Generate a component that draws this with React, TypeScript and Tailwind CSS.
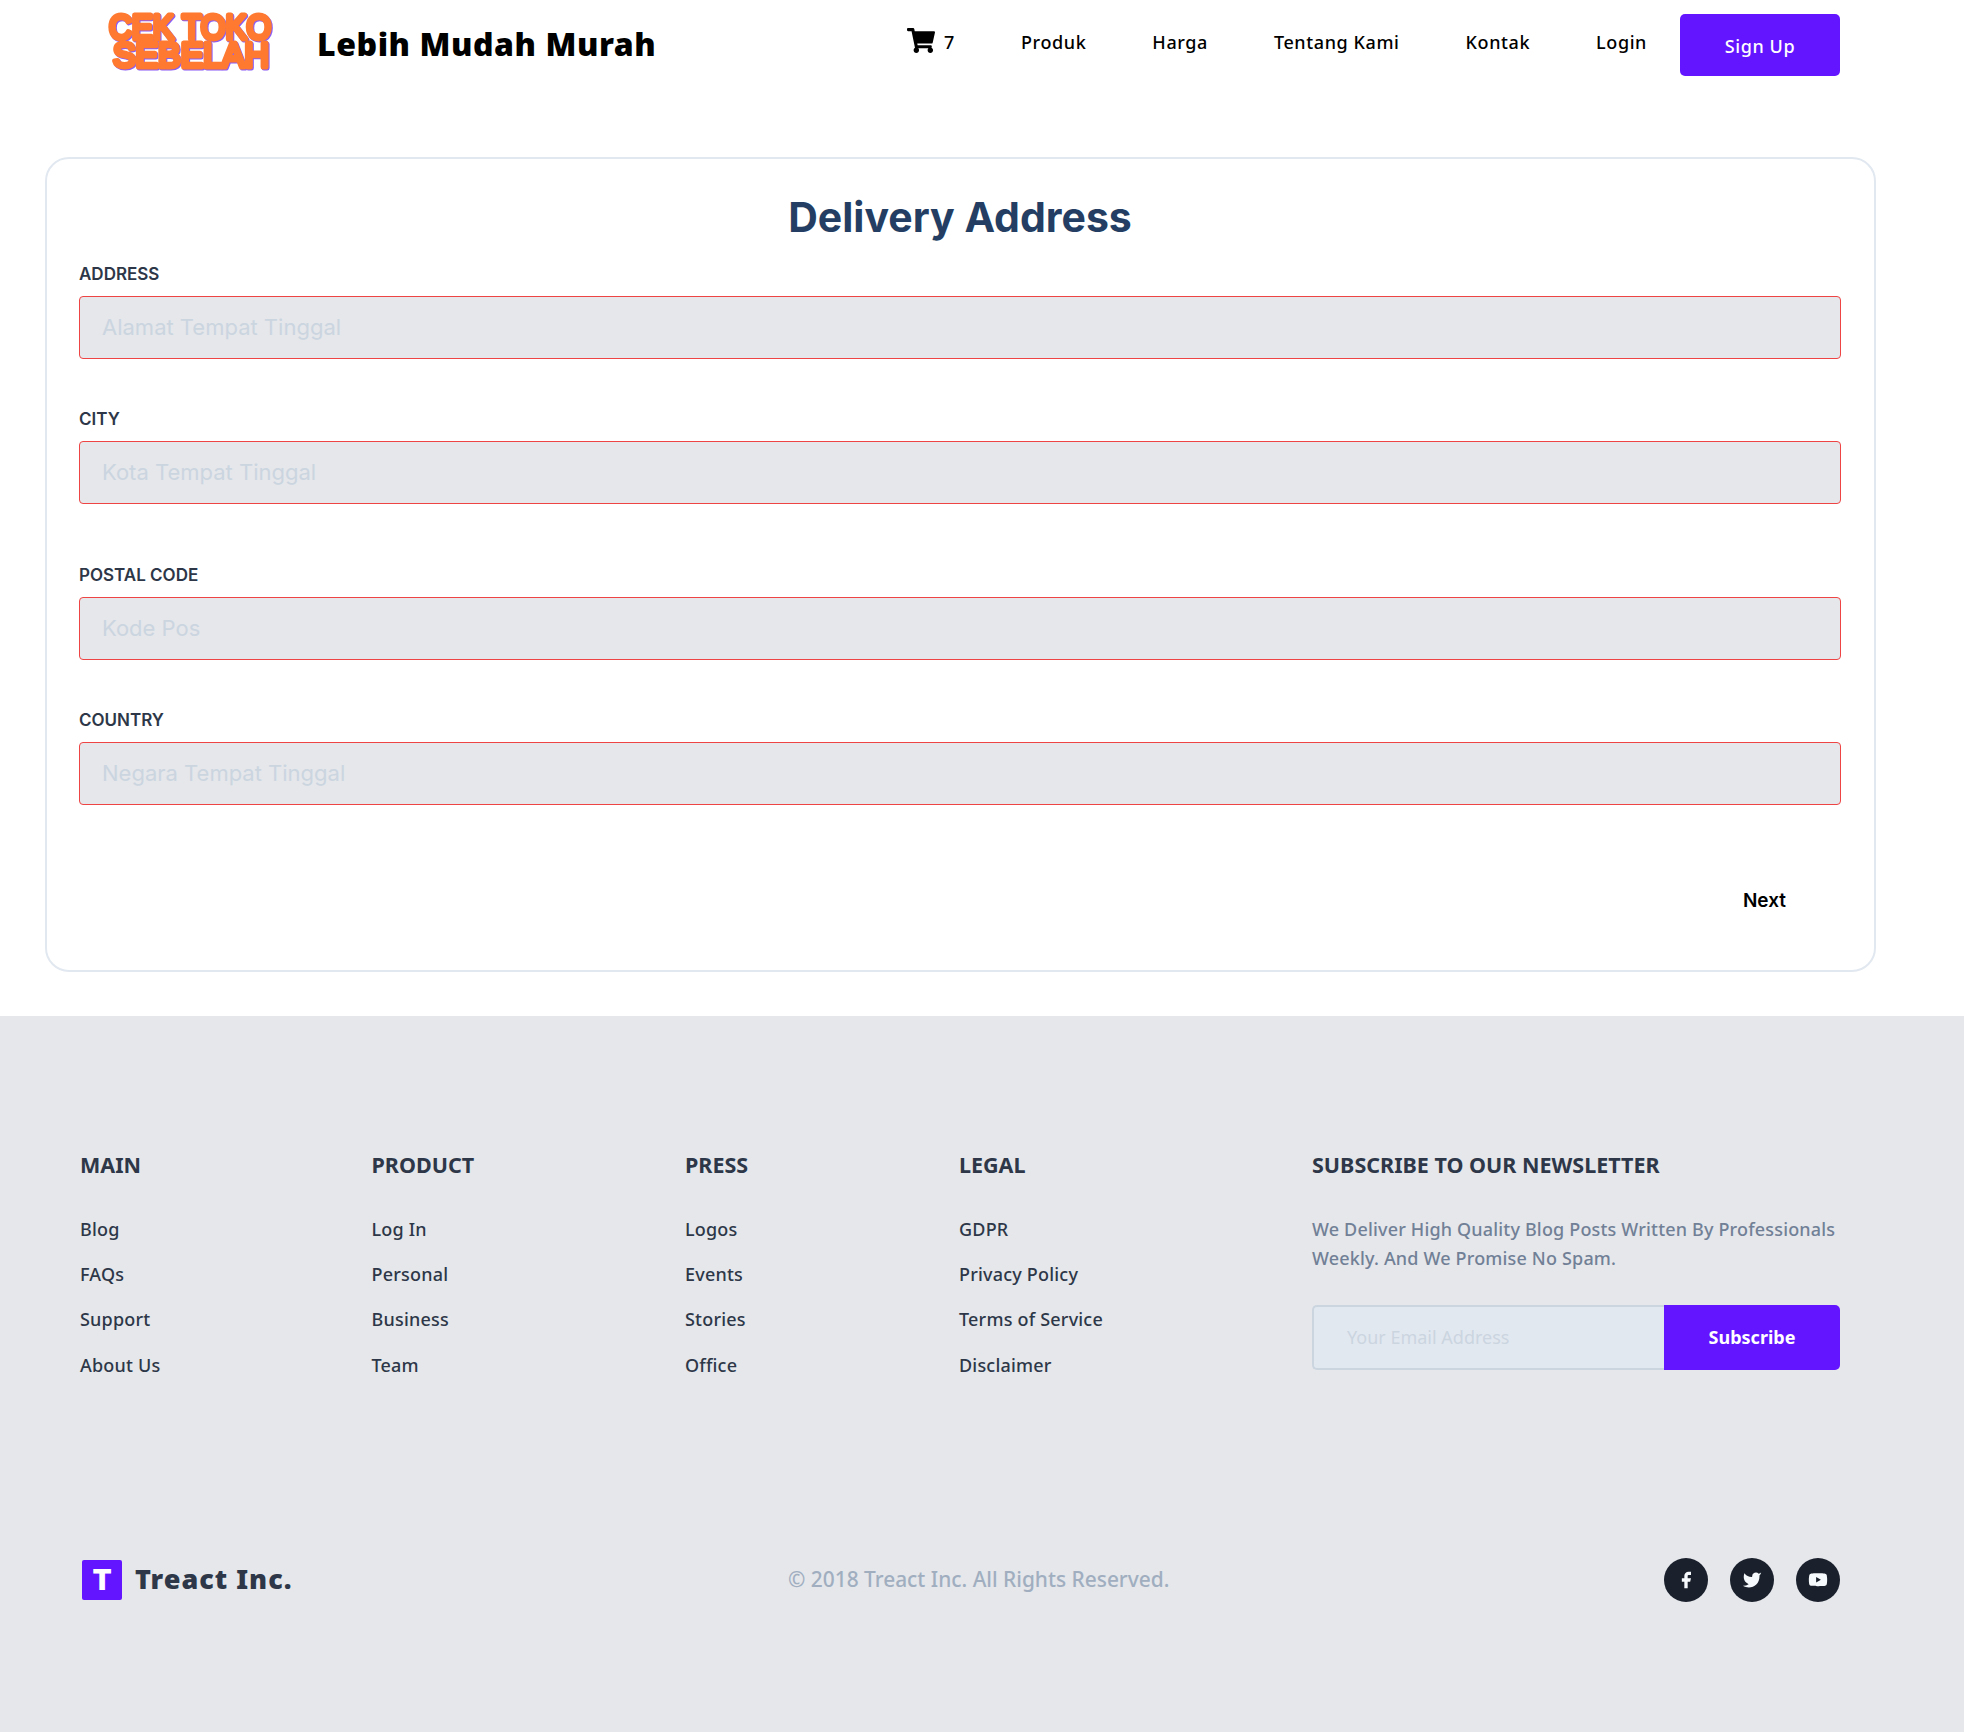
import { FaShoppingCart } from "react-icons/fa";

const sans = "font-['Noto_Sans','Open_Sans',sans-serif]";
const inter = "font-['Inter',sans-serif]";

const fields = [
  { label: "ADDRESS", ph: "Alamat Tempat Tinggal", cls: "mb-[48px]" },
  { label: "CITY", ph: "Kota Tempat Tinggal", cls: "mb-[59px]" },
  { label: "POSTAL CODE", ph: "Kode Pos", cls: "mb-[48px]" },
  { label: "COUNTRY", ph: "Negara Tempat Tinggal", cls: "" },
];

const cols = [
  { t: "MAIN", w: "w-[291.5px]", l: ["Blog", "FAQs", "Support", "About Us"] },
  { t: "PRODUCT", w: "w-[313.5px]", l: ["Log In", "Personal", "Business", "Team"] },
  { t: "PRESS", w: "w-[274px]", l: ["Logos", "Events", "Stories", "Office"] },
  { t: "LEGAL", w: "w-[353px]", l: ["GDPR", "Privacy Policy", "Terms of Service", "Disclaimer"] },
];

function Social({ children }: { children: React.ReactNode }) {
  return (
    <div className="w-11 h-11 rounded-full bg-[#1a202c] flex items-center justify-center">
      <svg viewBox="0 0 24 24" className="w-5 h-5" fill="#f7fafc">{children}</svg>
    </div>
  );
}

function Logo() {
  return (
    <svg
      viewBox="0 0 170 72"
      className="w-[170px] h-[72px] shrink-0 drop-shadow-[1.5px_1.5px_0_#8a5cf6]"
      fill="#ff7a30"
      stroke="#ff7a30"
      strokeWidth={5}
      strokeLinejoin="round"
      strokeLinecap="round"
      fontFamily="'Liberation Sans', sans-serif"
      fontSize={35}
    >
      <text x={4} y={30} textLength={162} lengthAdjust="spacingAndGlyphs">CEK TOKO</text>
      <text x={8} y={58} textLength={156} lengthAdjust="spacingAndGlyphs">SEBELAH</text>
    </svg>
  );
}

export default function App() {
  return (
    <div className={`bg-white min-h-[1732px] ${sans}`}>
      <header className="h-[90px] flex items-center pl-[105px] pr-[124px]">
        <Logo />
        <div className="ml-[42px] -mt-[2px] text-[32px] font-black text-black tracking-[0.55px] whitespace-nowrap">Lebih Mudah Murah</div>
        <nav className="ml-auto flex items-center text-[18px] font-medium tracking-[0.6px] text-black whitespace-nowrap">
          <div className="flex items-center pb-[6px]">
            <div className="flex items-center mr-[66px]">
              <FaShoppingCart className="w-[28px] h-[25px] mr-[9px] -mt-1" />
              <span>7</span>
            </div>
            <span className="mr-[66px]">Produk</span>
            <span className="mr-[66px]">Harga</span>
            <span className="mr-[66px]">Tentang Kami</span>
            <span className="mr-[66px]">Kontak</span>
            <span className="mr-[33px]">Login</span>
          </div>
          <span className="w-[160px] h-[62px] bg-[#6415ff] rounded-[5px] text-white flex items-center justify-center pt-[3px]">Sign Up</span>
        </nav>
      </header>

      <main className={`px-[45px] pt-[67px] pb-[44px] ${inter}`}>
        <div className="w-[1831px] h-[815px] border-2 border-[#e2e8f0] rounded-3xl pl-[32px] pr-[33px] pt-[30px]">
          <h1 className="text-center text-[41px] leading-[56px] font-bold text-[#243e63] mb-[17px]">Delivery Address</h1>
          {fields.map((f) => (
            <div key={f.label} className={f.cls}>
              <label className="block text-[17px] leading-[24px] font-semibold text-[#2d3748] mb-[10px]">{f.label}</label>
              <input
                readOnly
                placeholder={f.ph}
                className="block w-full h-[63px] bg-[#e5e7eb] border border-[#ef4444] rounded-[4px] px-[22px] pb-[2px] text-[22px] placeholder:text-[#cbd5e0] outline-none"
              />
            </div>
          ))}
          <div className="flex justify-end mt-[82px] pr-[55px] text-[19px] font-semibold text-black leading-[28px]">Next</div>
        </div>
      </main>

      <footer className="bg-[#e5e7eb] h-[716px] pl-[80px] pr-[124px] pt-[133px]">
        <div className="flex">
          {cols.map((c) => (
            <div key={c.t} className={c.w}>
              <h5 className="text-[21.5px] leading-[32px] font-bold text-[#2d3748]">{c.t}</h5>
              <ul className="mt-[35px] text-[18px] leading-[27px] font-medium tracking-[0.2px] text-[#2d3748] flex flex-col gap-[18.2px]">
                {c.l.map((x) => <li key={x}>{x}</li>)}
              </ul>
            </div>
          ))}
          <div className="w-[528px]">
            <h5 className="text-[21.5px] leading-[32px] font-bold text-[#2d3748]">SUBSCRIBE TO OUR NEWSLETTER</h5>
            <p className="mt-[34px] text-[18px] leading-[29px] font-medium tracking-[0.17px] text-[#718096]">
              We Deliver High Quality Blog Posts Written By Professionals<br />Weekly. And We Promise No Spam.
            </p>
            <div className="flex mt-[32px] h-[65px]">
              <div className="w-[352px] bg-[#e2e8f0] border-2 border-r-0 border-[#cbd5e0] rounded-l-[5px] flex items-center pl-[33px] text-[18px] text-[#cbd5e0]">Your Email Address</div>
              <div className="w-[176px] bg-[#6415ff] text-white font-bold text-[18px] rounded-r-[5px] flex items-center justify-center">Subscribe</div>
            </div>
          </div>
        </div>

        <div className="flex items-center mt-[179px] h-[44px]">
          <div className="flex items-center w-[708px] pl-[2px]">
            <div className="w-10 h-10 bg-[#6415ff] rounded-[2px] text-white font-black text-[28px] flex items-center justify-center font-['Inter',sans-serif]">T</div>
            <span className="ml-[13px] text-[27px] font-black tracking-[1px] text-[#2d3748]">Treact Inc.</span>
          </div>
          <div className="text-[20.9px] font-medium text-[#a0aec0] whitespace-nowrap">© 2018 Treact Inc. All Rights Reserved.</div>
          <div className="flex ml-auto gap-[22px]">
            <Social><path d="M18 2h-3a5 5 0 00-5 5v3H7v4h3v8h4v-8h3l1-4h-4V7a1 1 0 011-1h3z" /></Social>
            <Social><path d="M23 3a10.9 10.9 0 01-3 1.53 4.48 4.48 0 00-7.86 3v1A10.66 10.66 0 013 4s-4 9 5 13a11.64 11.64 0 01-7 2c9 5 20 0 20-11.5a4.5 4.5 0 00-.08-.83A7.72 7.72 0 0023 3z" /></Social>
            <Social>
              <path d="M22.54 6.42a2.78 2.78 0 00-1.94-2C18.88 4 12 4 12 4s-6.88 0-8.6.46a2.78 2.78 0 00-1.94 2A29 29 0 001 11.75a29 29 0 00.46 5.33A2.78 2.78 0 003.4 19c1.72.46 8.6.46 8.6.46s6.88 0 8.6-.46a2.78 2.78 0 001.94-1.94 29 29 0 00.46-5.25 29 29 0 00-.46-5.33z" />
              <polygon points="9.75 15.02 15.5 11.75 9.75 8.48 9.75 15.02" fill="#1a202c" />
            </Social>
          </div>
        </div>
      </footer>
    </div>
  );
}
